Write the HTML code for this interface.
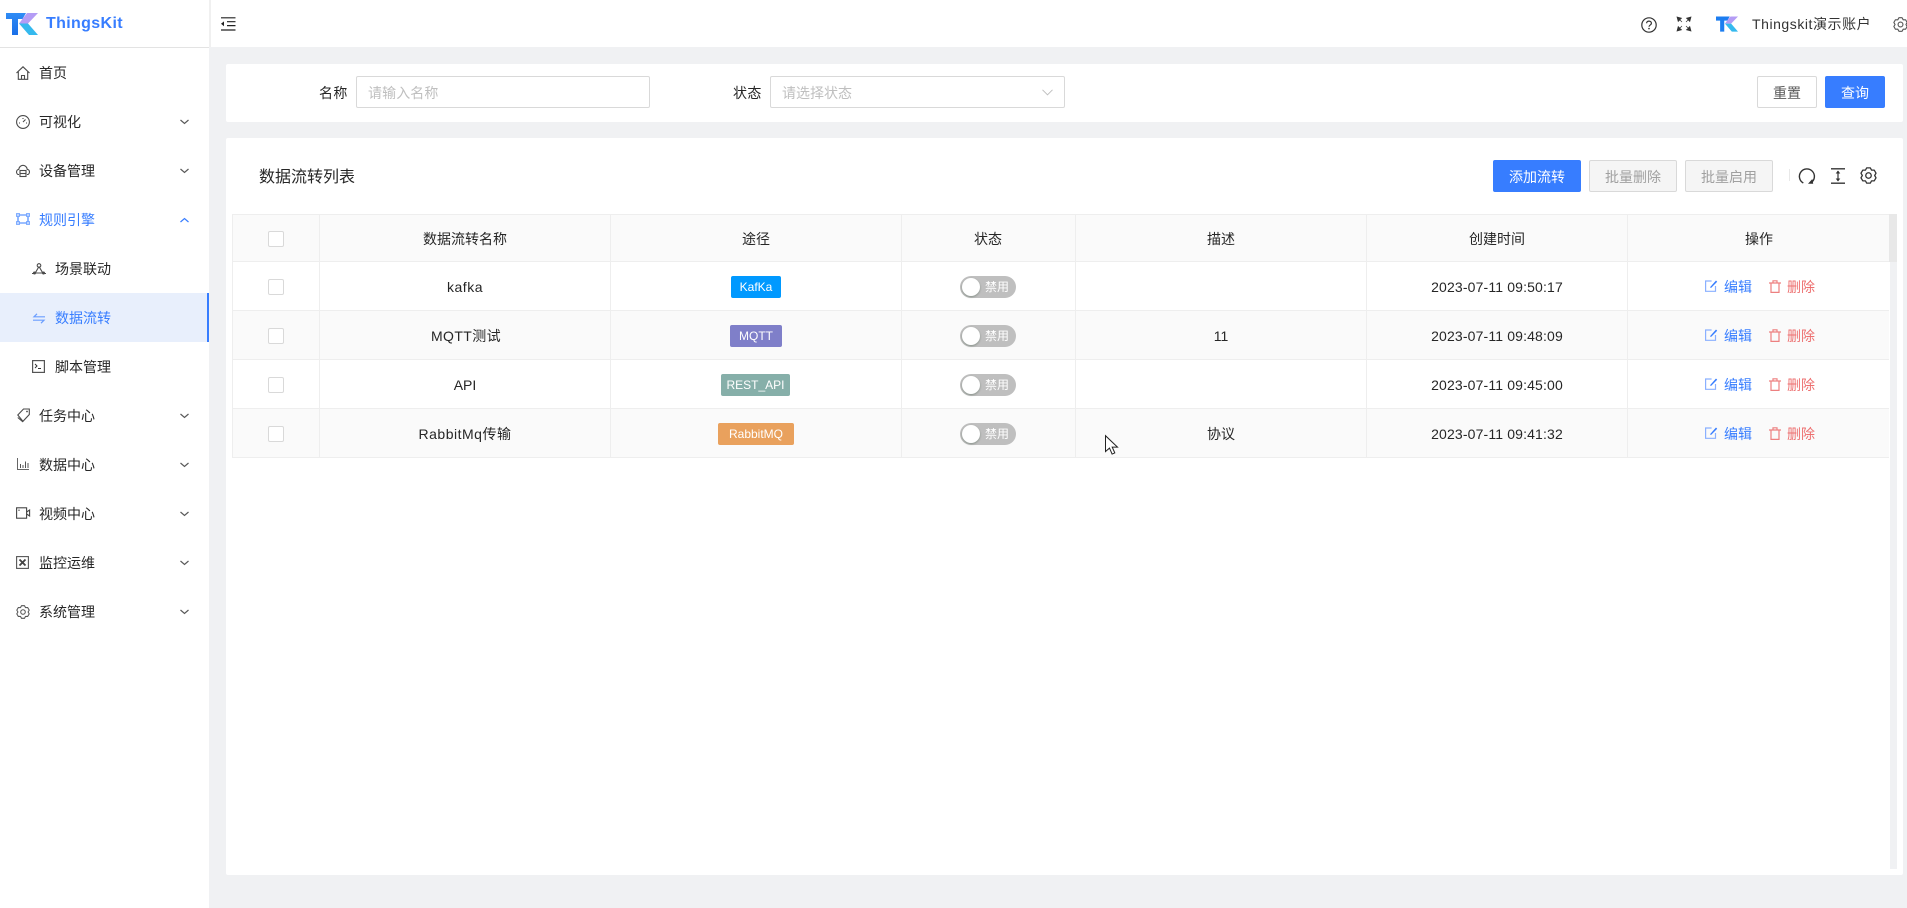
<!DOCTYPE html>
<html lang="zh"><head><meta charset="utf-8"><title>ThingsKit</title>
<style>
*{box-sizing:border-box}
html,body{margin:0;padding:0;width:1907px;height:908px;overflow:hidden;background:#f0f1f3;font-family:"Liberation Sans","Noto Sans CJK SC",sans-serif;font-size:14px;color:#262626}
.a{position:absolute}
.t{position:absolute;white-space:nowrap;line-height:20px;height:20px}
.c{position:absolute;white-space:nowrap;line-height:20px;height:20px;text-align:center;transform:translateX(-50%)}
svg{position:absolute;display:block;overflow:visible}
.cb{position:absolute;width:16px;height:16px;background:#fff;border:1px solid #d9d9d9;border-radius:2px;left:268px}
.tag{position:absolute;height:22px;line-height:23px;color:#fff;font-size:12px;text-align:center;border-radius:2px;white-space:nowrap}
.sw{position:absolute;left:960px;width:56px;height:22px;border-radius:11px;background:#bfbfbf}
.sw i{position:absolute;left:2px;top:2px;width:18px;height:18px;border-radius:50%;background:#fff;box-shadow:0 1px 2px rgba(0,35,11,.3)}
.sw b{position:absolute;left:25px;top:0;font-weight:400;color:#fff;font-size:12px;line-height:22px;white-space:nowrap}
.h{background:#eee}
.btn{position:absolute;height:32px;line-height:32px;text-align:center;border-radius:2px;border:1px solid #d9d9d9;background:#fff;color:#595959;white-space:nowrap}
.p{background:#377dff;border-color:#377dff;color:#fff}
.d{background:#f5f5f5;color:#a0a0a0}
.chev{fill:none;stroke:#595959;stroke-width:1.2}
.ic{fill:none;stroke:#4a4a4a;stroke-width:1.1}
.blue{color:#377dff}.red{color:#ed6f6f}
</style></head><body>

<!-- header -->
<div class="a" style="left:0;top:0;width:1907px;height:47px;background:#fff"></div>
<div class="a" style="left:209px;top:0;width:2px;height:47px;background:#f0f0f0"></div>
<svg style="left:221px;top:17px" width="15" height="14" viewBox="0 0 15 14"><path d="M0 .8h14.5M6 4.700h8.500M6 8.600h8.500M0 13h14.500" stroke="#222" stroke-width="1.200" fill="none"/><path d="M0 6.800l3-2.400v4.800z" fill="#222"/></svg>
<svg style="left:1641px;top:17px" width="16" height="16" viewBox="0 0 16 16"><circle cx="8" cy="8" r="7.200" fill="none" stroke="#333" stroke-width="1.200"/><path d="M5.600 6.300c0-1.400 1-2.200 2.400-2.200s2.400.9 2.400 2.100c0 1.900-2.400 1.800-2.400 3.600" fill="none" stroke="#333" stroke-width="1.200"/><circle cx="8" cy="11.600" r=".8" fill="#333"/></svg>
<svg style="left:1677px;top:17px" width="14" height="14" viewBox="0 0 14 14"><path d="M0 0l4.500 1.200-3.300 3.300zM14 0l-4.500 1.200 3.300 3.300zM0 14l4.500-1.200-3.300-3.300zM14 14l-4.500-1.200 3.300-3.300zM2 2l3 3M12 2L9 5M2 12l3-3M12 12L9 9" fill="#333" stroke="#333" stroke-width=".7"/></svg>
<svg style="left:1716px;top:16px" width="22" height="16" viewBox="0 0 32 22"><path d="M0 0H20L16.500 6H12V22H6V6H0Z" fill="#1c7df0"/><path d="M21 0H32L22 10.500H13Z" fill="#b49cf5"/><path d="M13 10.500H22L32 22H23Z" fill="#35b9ee"/></svg>
<div class="t" style="left:1752px;top:14px;letter-spacing:.55px;color:#333;font-size:14px">Thingskit演示账户</div>
<svg style="left:1893px;top:17px" width="15" height="15" viewBox="0 0 16 16"><path d="M6.330.79H9.670L10.900 2.980L13.410 2.950L15.080 5.840L13.800 8L15.080 10.160L13.410 13.050L10.900 13.020L9.670 15.210H6.330L5.100 13.020L2.590 13.050L.92 10.160L2.200 8L.92 5.840L2.590 2.950L5.100 2.980Z" fill="none" stroke="#555" stroke-width="1.200" stroke-linejoin="round"/><circle cx="8" cy="8" r="2.600" fill="none" stroke="#555" stroke-width="1.200"/></svg>

<!-- sidebar -->
<div class="a" style="left:0;top:0;width:209px;height:908px;background:#fff"></div>
<div class="a" style="left:0;top:47px;width:209px;height:1px;background:#e3e3e3"></div>
<svg style="left:6px;top:13px" width="32" height="22" viewBox="0 0 32 22"><defs><linearGradient id="g1" x1="0" y1="0" x2="0" y2="1"><stop offset="0" stop-color="#2f8cf5"/><stop offset="1" stop-color="#1a6fe8"/></linearGradient></defs><path d="M0 0H20L16.500 6H12V22H6V6H0Z" fill="url(#g1)"/><path d="M21 0H32L22 10.500H13Z" fill="#b49cf5"/><path d="M13 10.500H22L32 22H23Z" fill="#35b9ee"/></svg>
<div class="t" style="left:46px;top:14px;font-size:16px;font-weight:700;color:#377dff;letter-spacing:.35px">ThingsKit</div>

<svg style="left:16px;top:66px" width="14" height="14" viewBox="0 0 14 14"><path class="ic" d="M.5 7L7 .8 13.500 7M2.300 5.800V13.300h9.400V5.800M5.500 13.300V9.500h3v3.800"/></svg><div class="t" style="left:39px;top:63px">首页</div>
<svg style="left:16px;top:115px" width="14" height="14" viewBox="0 0 14 14"><circle class="ic" cx="7" cy="7" r="6.400"/><path class="ic" d="M7 7l2.500-2.500M3 8h1M10 8h1M7 3v1"/></svg><div class="t" style="left:39px;top:112px">可视化</div>
<svg class="chev" style="left:180px;top:119px" width="9" height="6" viewBox="0 0 9 6"><path d="M.5 1l4 3.500 4-3.500"/></svg>
<svg style="left:16px;top:164px" width="14" height="14" viewBox="0 0 14 14"><path class="ic" d="M3 10.500H2C.9 10 .4 8.500.6 7.400.9 6 2 5.500 2.700 5.500 3 3 5 1.300 7 1.300s4 1.700 4.300 4.200c.8 0 1.900.5 2.100 1.900.2 1.100-.3 2.600-1.400 3.100h-1"/><rect class="ic" x="4" y="6.500" width="6" height="6"/><path class="ic" d="M4 9.500h6"/></svg><div class="t" style="left:39px;top:161px">设备管理</div>
<svg class="chev" style="left:180px;top:168px" width="9" height="6" viewBox="0 0 9 6"><path d="M.5 1l4 3.500 4-3.500"/></svg>
<svg style="left:16px;top:213px" width="14" height="12" viewBox="0 0 14 12"><path d="M2 2h10M2 10h10M2 2v8M12 2v8" stroke="#377dff" stroke-width="1.100" fill="none"/><path d="M.5.500h3v3h-3zM10.500.500h3v3h-3zM.5 8.500h3v3h-3zM10.500 8.500h3v3h-3z" fill="#bcd4ff" stroke="#6a9eff" stroke-width=".8"/></svg><div class="t blue" style="left:39px;top:210px">规则引擎</div>
<svg style="left:180px;top:217px;fill:none;stroke:#377dff;stroke-width:1.200" width="9" height="6" viewBox="0 0 9 6"><path d="M.5 5l4-3.500 4 3.500"/></svg>

<svg style="left:32px;top:263px" width="14" height="12" viewBox="0 0 14 12"><path class="ic" d="M7 3.500L3.500 9.500M7 3.500l3.500 6M3 10h8M0 10.500h2M12 10.500h2"/><circle cx="7" cy="2.500" r="1.800" class="ic"/><circle cx="2.500" cy="10" r="1.500" fill="#4a4a4a"/><circle cx="11.500" cy="10" r="1.500" fill="#4a4a4a"/></svg><div class="t" style="left:55px;top:259px">场景联动</div>

<div class="a" style="left:0;top:293px;width:209px;height:49px;background:#e8effc"></div>
<div class="a" style="left:207px;top:293px;width:2px;height:49px;background:#377dff"></div>
<svg style="left:33px;top:313px" width="12" height="11" viewBox="0 0 12 11" fill="none" stroke="#6a9eff" stroke-width="1.200"><path d="M12 3.800H1L4 .8M0 7.200h11L8 10.200"/></svg><div class="t blue" style="left:55px;top:308px">数据流转</div>

<svg style="left:32px;top:360px" width="13" height="13" viewBox="0 0 13 13"><rect x=".6" y=".6" width="11.800" height="11.800" fill="none" stroke="#555" stroke-width="1.200"/><path d="M3 4l2 2-2 2M6 8.500h3" stroke="#333" stroke-width="1" fill="none"/></svg><div class="t" style="left:55px;top:357px">脚本管理</div>

<svg style="left:17px;top:408px" width="13" height="14" viewBox="0 0 13 14"><path class="ic" d="M.8 7L6.500 1h5.800v5.500L6 13.300zM.8 9.500L6 14"/><circle cx="10" cy="3.500" r=".9" fill="#4a4a4a"/></svg><div class="t" style="left:39px;top:406px">任务中心</div>
<svg class="chev" style="left:180px;top:413px" width="9" height="6" viewBox="0 0 9 6"><path d="M.5 1l4 3.500 4-3.500"/></svg>
<svg style="left:17px;top:458px" width="12" height="12" viewBox="0 0 12 12"><path d="M.5 0v11.500H12" stroke="#666" stroke-width="1" fill="none"/><path d="M3 6h1v4H3zM5.500 7h1v3h-1zM8 3.500h1V10H8zM10.500 5h1v5h-1z" fill="#555"/></svg><div class="t" style="left:39px;top:455px">数据中心</div>
<svg class="chev" style="left:180px;top:462px" width="9" height="6" viewBox="0 0 9 6"><path d="M.5 1l4 3.500 4-3.500"/></svg>
<svg style="left:16px;top:507px" width="14" height="12" viewBox="0 0 14 12"><rect x=".6" y=".8" width="10" height="10.400" fill="none" stroke="#444" stroke-width="1.100"/><path d="M10.600 5l3-2v6l-3-2" fill="none" stroke="#444" stroke-width="1.100"/><circle cx="3" cy="3.200" r=".7" fill="#444"/></svg><div class="t" style="left:39px;top:504px">视频中心</div>
<svg class="chev" style="left:180px;top:511px" width="9" height="6" viewBox="0 0 9 6"><path d="M.5 1l4 3.500 4-3.500"/></svg>
<svg style="left:16px;top:556px" width="13" height="13" viewBox="0 0 13 13"><rect x=".6" y=".6" width="11.800" height="11.800" fill="none" stroke="#555" stroke-width="1.100"/><path d="M3.500 3.500l6 6M9.500 3.500l-6 6" stroke="#444" stroke-width="1.800"/></svg><div class="t" style="left:39px;top:553px">监控运维</div>
<svg class="chev" style="left:180px;top:560px" width="9" height="6" viewBox="0 0 9 6"><path d="M.5 1l4 3.500 4-3.500"/></svg>
<svg style="left:16px;top:605px" width="14" height="14" viewBox="0 0 16 16"><path d="M6.330.79H9.670L10.900 2.980L13.410 2.950L15.080 5.840L13.800 8L15.080 10.160L13.410 13.050L10.900 13.020L9.670 15.210H6.330L5.100 13.020L2.590 13.050L.92 10.160L2.200 8L.92 5.840L2.590 2.950L5.100 2.980Z" fill="none" stroke="#555" stroke-width="1.200" stroke-linejoin="round"/><circle cx="8" cy="8" r="2.600" fill="none" stroke="#555" stroke-width="1.200"/></svg><div class="t" style="left:39px;top:602px">系统管理</div>
<svg class="chev" style="left:180px;top:609px" width="9" height="6" viewBox="0 0 9 6"><path d="M.5 1l4 3.500 4-3.500"/></svg>

<!-- search card -->
<div class="a" style="left:226px;top:64px;width:1677px;height:58px;background:#fff;border-radius:2px"></div>
<div class="t" style="left:319px;top:83px;letter-spacing:.4px">名称</div>
<div class="a" style="left:356px;top:76px;width:294px;height:32px;border:1px solid #d9d9d9;border-radius:2px;background:#fff"></div>
<div class="t" style="left:368px;top:83px;color:#bfbfbf;letter-spacing:.1px">请输入名称</div>
<div class="t" style="left:733px;top:83px;letter-spacing:.4px">状态</div>
<div class="a" style="left:770px;top:76px;width:295px;height:32px;border:1px solid #d9d9d9;border-radius:2px;background:#fff"></div>
<div class="t" style="left:782px;top:83px;color:#bfbfbf">请选择状态</div>
<svg style="left:1042px;top:89px" width="11" height="7" viewBox="0 0 11 7"><path d="M.5.800l5 5 5-5" fill="none" stroke="#bfbfbf" stroke-width="1"/></svg>
<div class="btn" style="left:1757px;top:76px;width:60px">重置</div>
<div class="btn p" style="left:1825px;top:76px;width:60px">查询</div>

<!-- table card -->
<div class="a" style="left:226px;top:138px;width:1677px;height:737px;background:#fff;border-radius:2px"></div>
<div class="t" style="left:259px;top:167px;font-size:16px;line-height:22px;height:22px;color:#262626">数据流转列表</div>
<div class="btn p" style="left:1493px;top:160px;width:88px">添加流转</div>
<div class="btn d" style="left:1589px;top:160px;width:88px">批量删除</div>
<div class="btn d" style="left:1685px;top:160px;width:88px">批量启用</div>
<div class="a" style="left:1789px;top:169px;width:1px;height:12px;background:#e8e8e8"></div>
<svg style="left:1799px;top:168px" width="16" height="16" viewBox="0 0 16 16"><path d="M4.300 15A7.500 7.500 0 1 1 12.300 14.500" fill="none" stroke="#333" stroke-width="1.400"/><path d="M9 15.800l5.200-.1-.9-4.700z" fill="#333"/></svg>
<svg style="left:1831px;top:168px" width="14" height="16" viewBox="0 0 14 16"><path d="M0 .8h14M0 15.200h14" stroke="#333" stroke-width="1.300"/><path d="M7 3v10" stroke="#333" stroke-width="1.200"/><path d="M7 2.500l-2.300 3h4.600zM7 13.500l-2.300-3h4.600z" fill="#333"/></svg>
<svg style="left:1860px;top:167px" width="17" height="17" viewBox="0 0 16 16"><path d="M6.330.79H9.670L10.900 2.980L13.410 2.950L15.080 5.840L13.800 8L15.080 10.160L13.410 13.050L10.900 13.020L9.670 15.210H6.330L5.100 13.020L2.590 13.050L.92 10.160L2.200 8L.92 5.840L2.590 2.950L5.100 2.980Z" fill="none" stroke="#333" stroke-width="1.200" stroke-linejoin="round"/><circle cx="8" cy="8" r="2.600" fill="none" stroke="#333" stroke-width="1.200"/></svg>

<!-- table -->
<div class="a" style="left:232px;top:214px;width:1657px;height:48px;background:#fafafa"></div>
<div class="a" style="left:232px;top:311px;width:1657px;height:48px;background:#fafafa"></div>
<div class="a" style="left:232px;top:409px;width:1657px;height:48px;background:#fafafa"></div>
<div class="a" style="left:1889px;top:214px;width:8px;height:48px;background:#e8e8e8"></div>
<div class="a" style="left:1890px;top:262px;width:7px;height:607px;background:#f0f1f3"></div>
<div class="a h" style="left:232px;top:214px;width:1657px;height:1px"></div>
<div class="a h" style="left:232px;top:261px;width:1657px;height:1px"></div>
<div class="a h" style="left:232px;top:310px;width:1657px;height:1px"></div>
<div class="a h" style="left:232px;top:359px;width:1657px;height:1px"></div>
<div class="a h" style="left:232px;top:408px;width:1657px;height:1px"></div>
<div class="a h" style="left:232px;top:457px;width:1657px;height:1px"></div>
<div class="a h" style="left:232px;top:214px;width:1px;height:244px"></div>
<div class="a h" style="left:319px;top:214px;width:1px;height:244px"></div>
<div class="a h" style="left:610px;top:214px;width:1px;height:244px"></div>
<div class="a h" style="left:901px;top:214px;width:1px;height:244px"></div>
<div class="a h" style="left:1075px;top:214px;width:1px;height:244px"></div>
<div class="a h" style="left:1366px;top:214px;width:1px;height:244px"></div>
<div class="a h" style="left:1627px;top:214px;width:1px;height:244px"></div>

<div class="cb" style="top:231px"></div><div class="cb" style="top:279px"></div><div class="cb" style="top:328px"></div><div class="cb" style="top:377px"></div><div class="cb" style="top:426px"></div>

<div class="c" style="left:465px;top:229px">数据流转名称</div>
<div class="c" style="left:756px;top:229px">途径</div>
<div class="c" style="left:988px;top:229px">状态</div>
<div class="c" style="left:1221px;top:229px">描述</div>
<div class="c" style="left:1497px;top:229px">创建时间</div>
<div class="c" style="left:1759px;top:229px">操作</div>

<div class="c" style="left:465px;top:277px;letter-spacing:.5px">kafka</div>
<div class="c" style="left:466px;top:326px;letter-spacing:.4px">MQTT测试</div>
<div class="c" style="left:465px;top:375px">API</div>
<div class="c" style="left:465px;top:424px;letter-spacing:.5px">RabbitMq传输</div>

<div class="tag" style="left:731px;top:276px;width:50px;background:#0099ff">KafKa</div>
<div class="tag" style="left:730px;top:325px;width:52px;background:#7f7fc9">MQTT</div>
<div class="tag" style="left:721px;top:374px;width:69px;background:#86afa9">REST_API</div>
<div class="tag" style="left:718px;top:423px;width:76px;background:#e9a15d">RabbitMQ</div>

<div class="sw" style="top:276px"><i></i><b>禁用</b></div>
<div class="sw" style="top:325px"><i></i><b>禁用</b></div>
<div class="sw" style="top:374px"><i></i><b>禁用</b></div>
<div class="sw" style="top:423px"><i></i><b>禁用</b></div>

<div class="c" style="left:1221px;top:326px">11</div>
<div class="c" style="left:1221px;top:424px">协议</div>

<div class="c" style="left:1497px;top:277px;letter-spacing:.15px">2023-07-11 09:50:17</div>
<div class="c" style="left:1497px;top:326px;letter-spacing:.15px">2023-07-11 09:48:09</div>
<div class="c" style="left:1497px;top:375px;letter-spacing:.15px">2023-07-11 09:45:00</div>
<div class="c" style="left:1497px;top:424px;letter-spacing:.15px">2023-07-11 09:41:32</div>

<svg style="left:1705px;top:279px" width="13" height="13" viewBox="0 0 13 13"><path d="M10.500 7v5.300H.6V2h6" fill="none" stroke="#8ab0ff" stroke-width="1.200"/><path d="M5 8.200L11 1.500l1.200 1.200L6 9z" fill="#377dff"/></svg><div class="t blue" style="left:1724px;top:277px">编辑</div>
<svg style="left:1769px;top:280px" width="12" height="13" viewBox="0 0 12 13"><path d="M0 3h12M2 3v9.400h8V3M4 3V.8h4V3" fill="none" stroke="#ed8080" stroke-width="1.200"/></svg><div class="t red" style="left:1787px;top:277px">删除</div>
<svg style="left:1705px;top:328px" width="13" height="13" viewBox="0 0 13 13"><path d="M10.500 7v5.300H.6V2h6" fill="none" stroke="#8ab0ff" stroke-width="1.200"/><path d="M5 8.200L11 1.500l1.200 1.200L6 9z" fill="#377dff"/></svg><div class="t blue" style="left:1724px;top:326px">编辑</div>
<svg style="left:1769px;top:329px" width="12" height="13" viewBox="0 0 12 13"><path d="M0 3h12M2 3v9.400h8V3M4 3V.8h4V3" fill="none" stroke="#ed8080" stroke-width="1.200"/></svg><div class="t red" style="left:1787px;top:326px">删除</div>
<svg style="left:1705px;top:377px" width="13" height="13" viewBox="0 0 13 13"><path d="M10.500 7v5.300H.6V2h6" fill="none" stroke="#8ab0ff" stroke-width="1.200"/><path d="M5 8.200L11 1.500l1.200 1.200L6 9z" fill="#377dff"/></svg><div class="t blue" style="left:1724px;top:375px">编辑</div>
<svg style="left:1769px;top:378px" width="12" height="13" viewBox="0 0 12 13"><path d="M0 3h12M2 3v9.400h8V3M4 3V.8h4V3" fill="none" stroke="#ed8080" stroke-width="1.200"/></svg><div class="t red" style="left:1787px;top:375px">删除</div>
<svg style="left:1705px;top:426px" width="13" height="13" viewBox="0 0 13 13"><path d="M10.500 7v5.300H.6V2h6" fill="none" stroke="#8ab0ff" stroke-width="1.200"/><path d="M5 8.200L11 1.500l1.200 1.200L6 9z" fill="#377dff"/></svg><div class="t blue" style="left:1724px;top:424px">编辑</div>
<svg style="left:1769px;top:427px" width="12" height="13" viewBox="0 0 12 13"><path d="M0 3h12M2 3v9.400h8V3M4 3V.8h4V3" fill="none" stroke="#ed8080" stroke-width="1.200"/></svg><div class="t red" style="left:1787px;top:424px">删除</div>

<!-- cursor -->
<svg style="left:1105px;top:435px" width="13" height="20" viewBox="0 0 13 20"><path d="M.5.700v15.800l4-3.400 2.600 6 2.700-1.200-2.600-5.800h5.300z" fill="#fff" stroke="#222" stroke-width="1"/></svg>

</body></html>
